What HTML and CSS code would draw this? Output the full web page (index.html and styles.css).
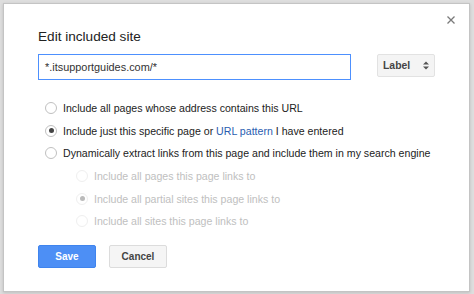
FILE: index.html
```html
<!DOCTYPE html>
<html>
<head>
<meta charset="utf-8">
<link rel="stylesheet" href="styles.css">
</head>
<body>
<div class="dialog">
  <button class="close" aria-label="Close">
    <svg width="8" height="8" viewBox="0 0 8 8"><path d="M0.5 0.5 L7.5 7.5 M7.5 0.5 L0.5 7.5" stroke="#7a7a7a" stroke-width="1.3"/></svg>
  </button>
  <h1 class="title">Edit included site</h1>
  <div class="field-row">
    <div class="url-input">*.itsupportguides.com/*</div>
    <div class="select">
      <span>Label</span>
      <svg width="6" height="9" viewBox="0 0 6 9"><path d="M0 3.5 L3 0.5 L6 3.5 Z M0 5.5 L3 8.5 L6 5.5 Z" fill="#555"/></svg>
    </div>
  </div>
  <div class="options">
    <div class="opt"><span class="radio"></span><span>Include all pages whose address contains this URL</span></div>
    <div class="opt"><span class="radio checked"></span><span>Include just this specific page or <a class="link">URL pattern</a> I have entered</span></div>
    <div class="opt"><span class="radio"></span><span>Dynamically extract links from this page and include them in my search engine</span></div>
    <div class="opt sub"><span class="radio"></span><span>Include all pages this page links to</span></div>
    <div class="opt sub"><span class="radio checked"></span><span>Include all partial sites this page links to</span></div>
    <div class="opt sub"><span class="radio"></span><span>Include all sites this page links to</span></div>
  </div>
  <div class="buttons">
    <button class="btn primary">Save</button>
    <button class="btn">Cancel</button>
  </div>
</div>
</body>
</html>
```
FILE: styles.css
```css
html, body {
  margin: 0;
  padding: 0;
}
body {
  background: #dedede;
  width: 474px;
  height: 294px;
  overflow: hidden;
  font-family: "Liberation Sans", Arial, sans-serif;
  color: #222;
}
.dialog {
  position: relative;
  box-sizing: border-box;
  margin: 3px 0 0 3px;
  width: 467px;
  height: 289px;
  background: #fff;
  border: 1px solid #c4c4c4;
  box-shadow: 0 1px 3px rgba(0,0,0,0.15);
  padding: 24px 0 0 34px;
}
.close {
  position: absolute;
  top: 12px;
  right: 14px;
  width: 8px;
  height: 8px;
  padding: 0;
  border: 0;
  background: none;
  display: flex;
}
.title {
  margin: 0;
  font-size: 13.6px;
  font-weight: normal;
  line-height: 17px;
  color: #222;
}
.field-row {
  display: flex;
  align-items: flex-start;
  gap: 26px;
  margin-top: 9px;
}
.url-input {
  box-sizing: border-box;
  width: 313px;
  height: 26px;
  border: 1px solid #4d90fe;
  padding: 0 0 0 6px;
  font-size: 10.9px;
  line-height: 24px;
  color: #333;
}
.select {
  box-sizing: border-box;
  width: 58px;
  height: 23px;
  background: #f4f4f4;
  border: 1px solid #e2e2e2;
  border-radius: 2px;
  display: flex;
  align-items: center;
  justify-content: space-between;
  padding: 0 5px 0 5px;
  font-size: 10.4px;
  font-weight: bold;
  color: #444;
}
.options {
  margin-top: 17px;
  display: flex;
  flex-direction: column;
}
.opt {
  height: 22.6px;
  display: flex;
  align-items: center;
  gap: 6px;
  padding-left: 7px;
  font-size: 10.6px;
  color: #222;
}
.opt.sub {
  padding-left: 38px;
  color: #c0c0c0;
}
.radio {
  box-sizing: border-box;
  width: 12px;
  height: 12px;
  border-radius: 50%;
  border: 1px solid #c0c0c0;
  background: #fff;
  display: flex;
  align-items: center;
  justify-content: center;
  flex: none;
}
.radio.checked::after {
  content: "";
  width: 5px;
  height: 5px;
  border-radius: 50%;
  background: #444;
}
.opt.sub .radio {
  border-color: #efefef;
}
.opt.sub .radio.checked::after {
  background: #bbb;
}
.link {
  color: #2a5db0;
}
.buttons {
  display: flex;
  gap: 13px;
  margin-top: 12px;
}
.btn {
  box-sizing: border-box;
  width: 58px;
  height: 23px;
  border-radius: 2px;
  border: 1px solid #dcdcdc;
  background: #f5f5f5;
  color: #444;
  font-family: "Liberation Sans", Arial, sans-serif;
  font-size: 10px;
  font-weight: bold;
  padding: 0;
}
.btn.primary {
  background: #4d8ff5;
  border-color: #3f84ee;
  color: #fff;
}
```
